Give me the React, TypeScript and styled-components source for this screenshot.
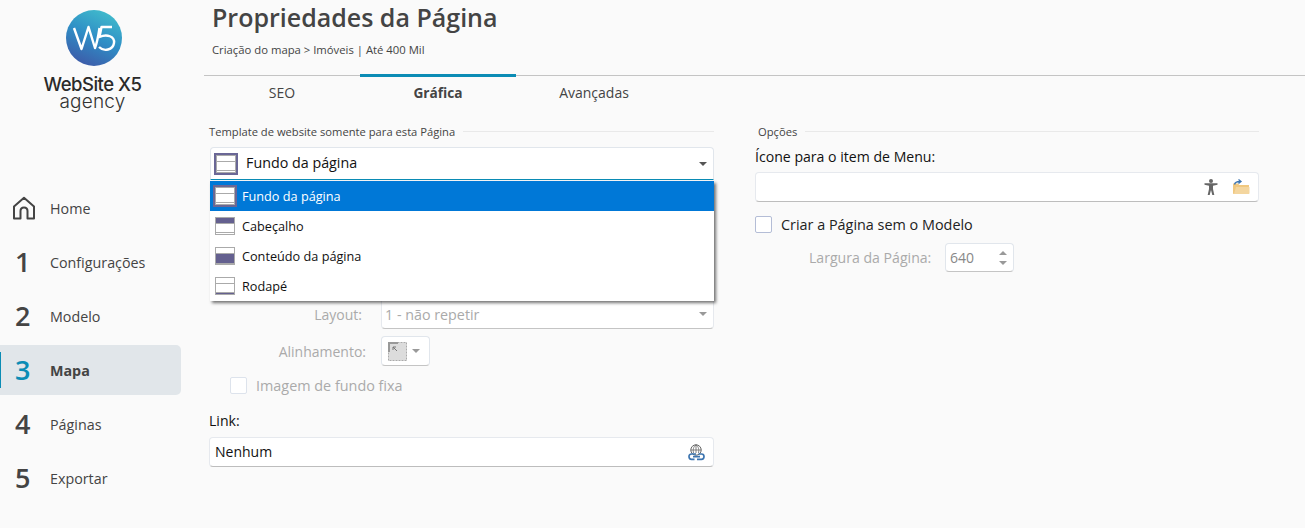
import React from 'react';
import styled, { createGlobalStyle } from 'styled-components';

const GlobalStyle = createGlobalStyle`
  html, body {
    margin: 0;
    background: #fafafa;
    font-family: "Open Sans", "Noto Sans", sans-serif;
    color: #444;
  }
  * { box-sizing: border-box; }
`;

const navItems = [
  { mark: '1', label: 'Configurações' },
  { mark: '2', label: 'Modelo' },
  { mark: '3', label: 'Mapa', active: true },
  { mark: '4', label: 'Páginas' },
  { mark: '5', label: 'Exportar' },
];

const templateItems: { label: string; fill: Fill; selected?: boolean }[] = [
  { label: 'Fundo da página', fill: 'none', selected: true },
  { label: 'Cabeçalho', fill: 'top' },
  { label: 'Conteúdo da página', fill: 'middle' },
  { label: 'Rodapé', fill: 'bottom' },
];

type Fill = 'none' | 'top' | 'middle' | 'bottom';

const LayoutThumb = ({ fill, framed }: { fill: Fill; framed?: boolean }) => (
  <Thumb $framed={framed}>
    <ThumbBand $height={6} $filled={fill === 'top'} />
    <ThumbBand $height={fill === 'middle' ? 10 : 9} $filled={fill === 'middle'} />
    <ThumbBand $height={fill === 'middle' ? 1 : 2} $filled={fill === 'bottom'} />
  </Thumb>
);

const HomeIcon = () => (
  <svg width="24" height="24" viewBox="0 0 24 24" fill="none" stroke="#444" strokeWidth="2">
    <path d="M2 22.500 V10.500 L12 1.800 L22 10.500 V22.500 H15.500 V15 C15.500 13 14 11.500 12 11.500 C10 11.500 8.500 13 8.500 15 V22.500 Z" strokeLinejoin="round" />
  </svg>
);

const Logo = () => (
  <svg width="56" height="56" viewBox="0 0 56 56" fill="none">
    <defs>
      <linearGradient id="logoFill" x1="0.75" y1="0" x2="0.3" y2="1">
        <stop offset="0" stopColor="#41bdcc" />
        <stop offset="0.5" stopColor="#2f8ec6" />
        <stop offset="1" stopColor="#3d5aa8" />
      </linearGradient>
    </defs>
    <circle cx="28" cy="28" r="28" fill="url(#logoFill)" />
    <path d="M8 18 L15.500 39 L22.500 17 L29 38 C31 33 32 28 33.500 18" stroke="#fff" strokeWidth="2.400" strokeLinejoin="round" />
    <path d="M46 17 H35.500 L33.500 27 C41 23.500 49 26.500 48 33 C47 40 38 42 33 37" stroke="#fff" strokeWidth="2.400" strokeLinejoin="round" />
  </svg>
);

const PersonIcon = () => (
  <svg width="14" height="16" viewBox="0 0 14 16" fill="#666">
    <circle cx="7" cy="2" r="2" />
    <path d="M0.500 4.300 H13.500 V5.800 L9 6.800 V10 L10.300 16 H8.300 L7 11 L5.700 16 H3.700 L5 10 V6.800 L0.500 5.800 Z" />
  </svg>
);

const FolderIcon = () => (
  <svg width="18" height="16" viewBox="0 0 18 16">
    <path d="M1 4.500 H6 L7.500 6 H17 V15 H2 C1.400 15 1 14.600 1 14 Z" fill="#f0c880" />
    <path d="M2 15 L4 8 H17.500 V14 C17.500 14.600 17 15 16.500 15 Z" fill="#f4d69f" />
    <path d="M2.500 5.500 C3 3 5 2.500 8 2.500 M6.500 0.500 L9 2.500 L6.500 4.500" fill="none" stroke="#3d75b0" strokeWidth="1.300" />
  </svg>
);

const LinkIcon = () => (
  <svg width="17" height="17" viewBox="0 0 17 17" fill="none">
    <circle cx="8" cy="6" r="5.200" stroke="#666" />
    <path d="M2.800 6 H13.200 M8 0.800 V9 M8 0.800 C5 3 5 6 5.500 9 M8 0.800 C11 3 11 6 10.500 9" stroke="#666" strokeWidth="0.800" />
    <path d="M8 10 H3.500 C1.800 10 1 11.200 1 12.500 C1 14 2 15.300 3.500 15.300 H6.500 M9 15.300 H13.500 C15.200 15.300 16 14 16 12.500 C16 11.200 15 10 13.500 10 H10.500 M5 12.700 H12" stroke="#3d75b0" strokeWidth="1.700" />
  </svg>
);

const AlignIcon = () => (
  <svg width="19" height="19" viewBox="0 0 19 19">
    <rect x="0.500" y="0.500" width="18" height="18" fill="#dcdcdc" stroke="#aaa" strokeDasharray="2 1" />
    <path d="M0 0 H10 V2 H2 V10 H0 Z" fill="#999" />
    <path d="M5 5 L9 9 M5 5 H8 M5 5 V8" stroke="#777" fill="none" />
  </svg>
);

export default function App() {
  return (
    <>
      <GlobalStyle />
      <Page>
        <Sidebar>
          <Brand>
            <Logo />
            <BrandName>WebSite X5</BrandName>
            <BrandEdition>agency</BrandEdition>
          </Brand>
          <Nav>
            <NavItem>
              <NavMark><HomeIcon /></NavMark>
              Home
            </NavItem>
            {navItems.map((item) => (
              <NavItem key={item.mark} $active={item.active}>
                <NavMark $active={item.active}>{item.mark}</NavMark>
                {item.label}
              </NavItem>
            ))}
          </Nav>
        </Sidebar>

        <Main>
          <Header>
            <Title>Propriedades da Página</Title>
            <Breadcrumb>Criação do mapa &gt; Imóveis | Até 400 Mil</Breadcrumb>
          </Header>

          <Tabs>
            <Tab>SEO</Tab>
            <Tab $active>Gráfica</Tab>
            <Tab>Avançadas</Tab>
          </Tabs>

          <Columns>
            <Column>
              <GroupTitle>Template de website somente para esta Página</GroupTitle>
              <SelectWrap>
                <Select $open>
                  <LayoutThumb fill="none" framed />
                  <SelectText>Fundo da página</SelectText>
                  <Caret />
                </Select>
                <Dropdown>
                  {templateItems.map((item) => (
                    <DropdownRow key={item.label} $selected={item.selected}>
                      <LayoutThumb fill={item.fill} framed={item.selected} />
                      {item.label}
                    </DropdownRow>
                  ))}
                </Dropdown>
              </SelectWrap>

              <FormRow>
                <FormLabel $inset={4}>Layout:</FormLabel>
                <PlainSelect>
                  1 - não repetir
                  <Caret $muted />
                </PlainSelect>
              </FormRow>
              <FormRow $top={7}>
                <FormLabel>Alinhamento:</FormLabel>
                <AlignButton>
                  <AlignIcon />
                  <Caret $muted />
                </AlignButton>
              </FormRow>
              <CheckRow $indent={21} $top={10} $muted>
                <CheckBox $muted />
                Imagem de fundo fixa
              </CheckRow>

              <FieldLabel $top={17}>Link:</FieldLabel>
              <TextField $top={6}>
                Nenhum
                <FieldIcons><LinkIcon /></FieldIcons>
              </TextField>
            </Column>

            <Column>
              <GroupTitle $indent={3}>Opções</GroupTitle>
              <FieldLabel $top={8}>Ícone para o item de Menu:</FieldLabel>
              <TextField>
                <FieldIcons>
                  <PersonIcon />
                  <FolderIcon />
                </FieldIcons>
              </TextField>
              <CheckRow $top={13}>
                <CheckBox />
                Criar a Página sem o Modelo
              </CheckRow>
              <WidthRow>
                <WidthLabel>Largura da Página:</WidthLabel>
                <SpinBox>
                  640
                  <SpinArrows>
                    <SpinUp />
                    <SpinDown />
                  </SpinArrows>
                </SpinBox>
              </WidthRow>
            </Column>
          </Columns>
        </Main>
      </Page>
    </>
  );
}

const Page = styled.div`
  display: flex;
  width: 1305px;
  height: 528px;
  overflow: hidden;
`;

const Sidebar = styled.aside`
  width: 204px;
  flex: none;
`;

const Brand = styled.div`
  height: 181px;
  padding-top: 10px;
  display: flex;
  flex-direction: column;
  align-items: center;
  width: 188px;
`;

const BrandName = styled.div`
  margin-top: 9px;
  padding-right: 3px;
  font-family: "Inter", sans-serif;
  font-size: 18.500px;
  line-height: 18px;
  font-weight: 500;
  color: #2a2a2a;
  letter-spacing: -0.5px;
  white-space: nowrap;
`;

const BrandEdition = styled.div`
  padding-right: 3px;
  font-family: "Inter", sans-serif;
  font-size: 19px;
  line-height: 18px;
  font-weight: 300;
  color: #333;
  letter-spacing: 0.2px;
`;

const Nav = styled.nav`
  display: flex;
  flex-direction: column;
  width: 181px;
`;

const NavItem = styled.div<{ $active?: boolean }>`
  position: relative;
  display: flex;
  align-items: center;
  height: ${(p) => (p.$active ? '50px' : '54px')};
  margin: ${(p) => (p.$active ? '2px 0' : '0')};
  padding-left: 12px;
  font-size: 14.300px;
  font-weight: ${(p) => (p.$active ? 700 : 400)};
  color: #444;
  background: ${(p) => (p.$active ? '#e1e6ea' : 'transparent')};
  border-radius: 0 5px 5px 0;

  ${(p) =>
    p.$active &&
    `&::before {
      content: '';
      position: absolute;
      left: 0;
      top: 7px;
      bottom: 7px;
      width: 1px;
      background: #0b8cb5;
    }`}
`;

const NavMark = styled.span<{ $active?: boolean }>`
  width: 38px;
  flex: none;
  display: flex;
  align-items: center;
  padding-left: 3px;
  font-size: 27px;
  font-weight: 600;
  line-height: 30px;
  color: ${(p) => (p.$active ? '#0b8cb5' : '#444')};

  svg {
    margin-left: -3px;
  }
`;

const Main = styled.main`
  flex: 1;
  min-width: 0;
`;

const Header = styled.header`
  height: 75px;
  padding-left: 8px;
`;

const Title = styled.h1`
  margin: 0;
  font-size: 25px;
  line-height: 34px;
  font-weight: 600;
  color: #444;
`;

const Breadcrumb = styled.div`
  margin-top: 8px;
  font-size: 11.300px;
  line-height: 16px;
  color: #444;
`;

const Tabs = styled.div`
  display: flex;
  height: 35px;
  border-top: 1px solid #c4c4c4;
`;

const Tab = styled.div<{ $active?: boolean }>`
  position: relative;
  width: 156px;
  display: flex;
  align-items: center;
  justify-content: center;
  padding-bottom: 2px;
  font-size: ${(p) => (p.$active ? '13.700px' : '14px')};
  font-weight: ${(p) => (p.$active ? 700 : 400)};
  color: #444;

  ${(p) =>
    p.$active &&
    `&::before {
      content: '';
      position: absolute;
      left: 0;
      right: 0;
      top: -2px;
      height: 3px;
      background: #0b8cb5;
    }`}
`;

const Columns = styled.div`
  display: grid;
  grid-template-columns: 505px 504px;
  column-gap: 41px;
  padding: 13px 0 0 5px;
`;

const Column = styled.section`
  display: flex;
  flex-direction: column;
`;

const GroupTitle = styled.div<{ $indent?: number }>`
  display: flex;
  align-items: center;
  gap: 8px;
  height: 16px;
  padding-left: ${(p) => p.$indent ?? 0}px;
  font-size: 11.200px;
  color: #444;
  white-space: nowrap;

  &::after {
    content: '';
    flex: 1;
    height: 1px;
    background: #e9e9e9;
  }
`;

const SelectWrap = styled.div`
  position: relative;
  margin: 8px 0 0 1px;
`;

const Select = styled.div<{ $open?: boolean }>`
  display: flex;
  align-items: center;
  height: 33px;
  padding: 0 6px 0 5px;
  background: #fff;
  border: 1px solid #e1e6ec;
  border-bottom: 1px solid ${(p) => (p.$open ? '#0b8cb5' : '#b5b5b5')};
  border-radius: 4px 4px 0 0;
`;

const SelectText = styled.span`
  flex: 1;
  margin-left: 10px;
  padding-bottom: 2px;
  font-size: 14.300px;
  color: #111;
`;

const Caret = styled.span<{ $muted?: boolean }>`
  width: 0;
  height: 0;
  margin-left: auto;
  border-left: 4px solid transparent;
  border-right: 4px solid transparent;
  border-top: 4px solid ${(p) => (p.$muted ? '#999' : '#555')};
`;

const Thumb = styled.span<{ $framed?: boolean }>`
  flex: none;
  display: flex;
  flex-direction: column;
  gap: 1px;
  width: 20px;
  height: 18px;
  background: #aaa;
  border: 1px solid #aaa;
  ${(p) => p.$framed && 'outline: 2px solid #6a6796;'}
`;

const ThumbBand = styled.span<{ $height: number; $filled: boolean }>`
  height: ${(p) => p.$height - 1}px;
  flex: 1 1 ${(p) => p.$height - 1}px;
  background: ${(p) => (p.$filled ? '#64608f' : '#fff')};
`;

const Dropdown = styled.div`
  position: absolute;
  top: 34px;
  left: 0;
  right: 0;
  z-index: 5;
  background: #fff;
  box-shadow: 2px 2px 3px rgba(0, 0, 0, 0.55);
`;

const DropdownRow = styled.div<{ $selected?: boolean }>`
  display: flex;
  align-items: center;
  gap: 7px;
  height: 30px;
  padding-left: 5px;
  font-size: 12.700px;
  color: ${(p) => (p.$selected ? '#fff' : '#111')};
  background: ${(p) => (p.$selected ? '#0078d7' : '#fff')};
`;

const FormRow = styled.div<{ $top?: number }>`
  display: grid;
  grid-template-columns: 157px 1fr;
  column-gap: 15px;
  align-items: center;
  margin-top: ${(p) => p.$top ?? 120}px;
`;

const FormLabel = styled.label<{ $inset?: number }>`
  text-align: right;
  padding-right: ${(p) => p.$inset ?? 0}px;
  font-size: 14px;
  color: #aaa;
`;

const PlainSelect = styled.div`
  display: flex;
  align-items: center;
  height: 29px;
  padding: 0 6px 0 3px;
  font-size: 14.300px;
  color: #aaa;
  background: #fff;
  border: 1px solid #e6e9ee;
  border-top: none;
  border-bottom-color: #c4c4c4;
  border-radius: 0 0 4px 4px;
`;

const AlignButton = styled.div`
  display: flex;
  align-items: center;
  justify-content: space-between;
  width: 49px;
  height: 30px;
  padding: 0 9px 0 6px;
  background: #fff;
  border: 1px solid #e1e6ec;
  border-bottom-color: #c4c4c4;
  border-radius: 4px;
`;

const CheckRow = styled.div<{ $indent?: number; $top?: number; $muted?: boolean }>`
  display: flex;
  align-items: center;
  gap: 9px;
  height: 18px;
  margin-top: ${(p) => p.$top ?? 0}px;
  padding-left: ${(p) => p.$indent ?? 0}px;
  font-size: 14.400px;
  color: ${(p) => (p.$muted ? '#aaa' : '#222')};
`;

const CheckBox = styled.span<{ $muted?: boolean }>`
  width: 17px;
  height: 17px;
  background: #fff;
  border: 1px solid ${(p) => (p.$muted ? '#dde3ec' : '#b4bdd6')};
  border-radius: 2px;
`;

const FieldLabel = styled.label<{ $top?: number }>`
  margin-top: ${(p) => p.$top ?? 0}px;
  font-size: 14.100px;
  line-height: 20px;
  color: #111;
`;

const TextField = styled.div<{ $top?: number }>`
  display: flex;
  align-items: center;
  height: 30px;
  margin-top: ${(p) => p.$top ?? 5}px;
  padding: 0 8px 0 5px;
  font-size: 14px;
  line-height: 18px;
  color: #111;
  background: #fff;
  border: 1px solid #e6e9ee;
  border-bottom-color: #bdbdbd;
  border-radius: 4px;
`;

const FieldIcons = styled.span`
  margin-left: auto;
  display: flex;
  align-items: center;
  gap: 14px;
`;

const WidthRow = styled.div`
  display: flex;
  align-items: center;
  margin-top: 10px;
  padding-left: 54px;
`;

const WidthLabel = styled.span`
  width: 123px;
  font-size: 14.100px;
  color: #aaa;
  white-space: nowrap;
`;

const SpinBox = styled.div`
  position: relative;
  display: flex;
  align-items: center;
  width: 69px;
  height: 29px;
  margin-left: 13px;
  padding-left: 4px;
  font-size: 14px;
  color: #888;
  background: #fff;
  border: 1px solid #e1e6ec;
  border-bottom-color: #c4c4c4;
  border-radius: 4px;
`;

const SpinArrows = styled.span`
  margin-left: auto;
  margin-right: 6px;
  display: flex;
  flex-direction: column;
  gap: 6px;
`;

const SpinUp = styled.span`
  width: 0;
  height: 0;
  border-left: 4px solid transparent;
  border-right: 4px solid transparent;
  border-bottom: 4px solid #999;
`;

const SpinDown = styled.span`
  width: 0;
  height: 0;
  border-left: 4px solid transparent;
  border-right: 4px solid transparent;
  border-top: 4px solid #999;
`;
